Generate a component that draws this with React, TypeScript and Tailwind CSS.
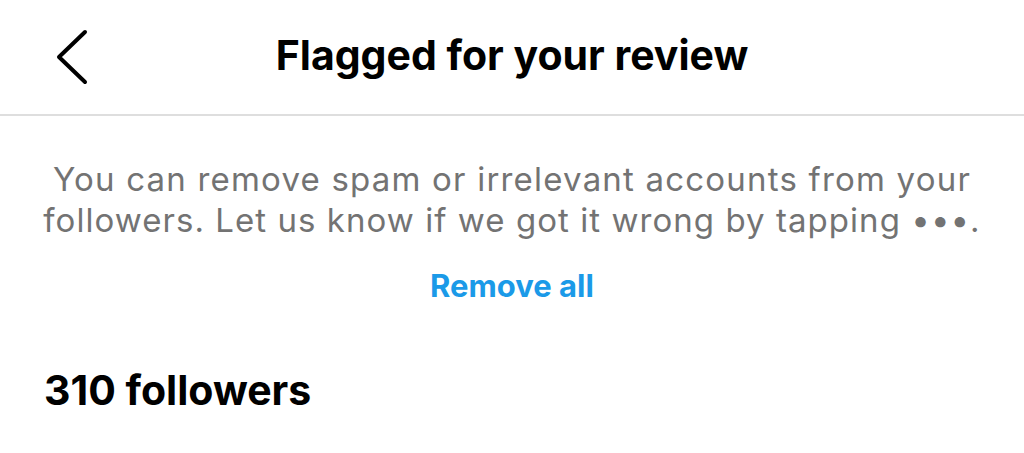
import React from "react";

export default function App() {
  return (
    <div className="w-[1024px] h-[453px] bg-white overflow-hidden font-['Inter',sans-serif]">
      <div className="relative h-[116px] flex items-center justify-center border-b-2 border-[#dedede]">
        <svg className="absolute left-[54px] top-[29px]" width="36" height="56" viewBox="0 0 36 56" fill="none">
          <path d="M31 3 L5 28 L31 53" stroke="#000" strokeWidth="4" strokeLinecap="round" strokeLinejoin="round" />
        </svg>
        <h1 className="text-[41px] font-bold text-black tracking-[0px] mt-[-2px]">Flagged for your review</h1>
      </div>
      <div className="flex flex-col items-center pt-[43px]">
        <p className="text-[33px] leading-[41px] tracking-[1.2px] text-[#737373] text-center w-[1000px]">
          You can remove spam or irrelevant accounts from your
          <br />
          <span className="tracking-[1.05px]">followers. Let us know if we got it wrong by tapping •••.</span>
        </p>
        <button className="mt-[22px] text-[31px] font-bold text-[#1b9ae8]">Remove all</button>
      </div>
      <div className="px-[44px] pt-[50px]">
        <div className="text-[41px] font-bold text-black">310 followers</div>
      </div>
    </div>
  );
}
